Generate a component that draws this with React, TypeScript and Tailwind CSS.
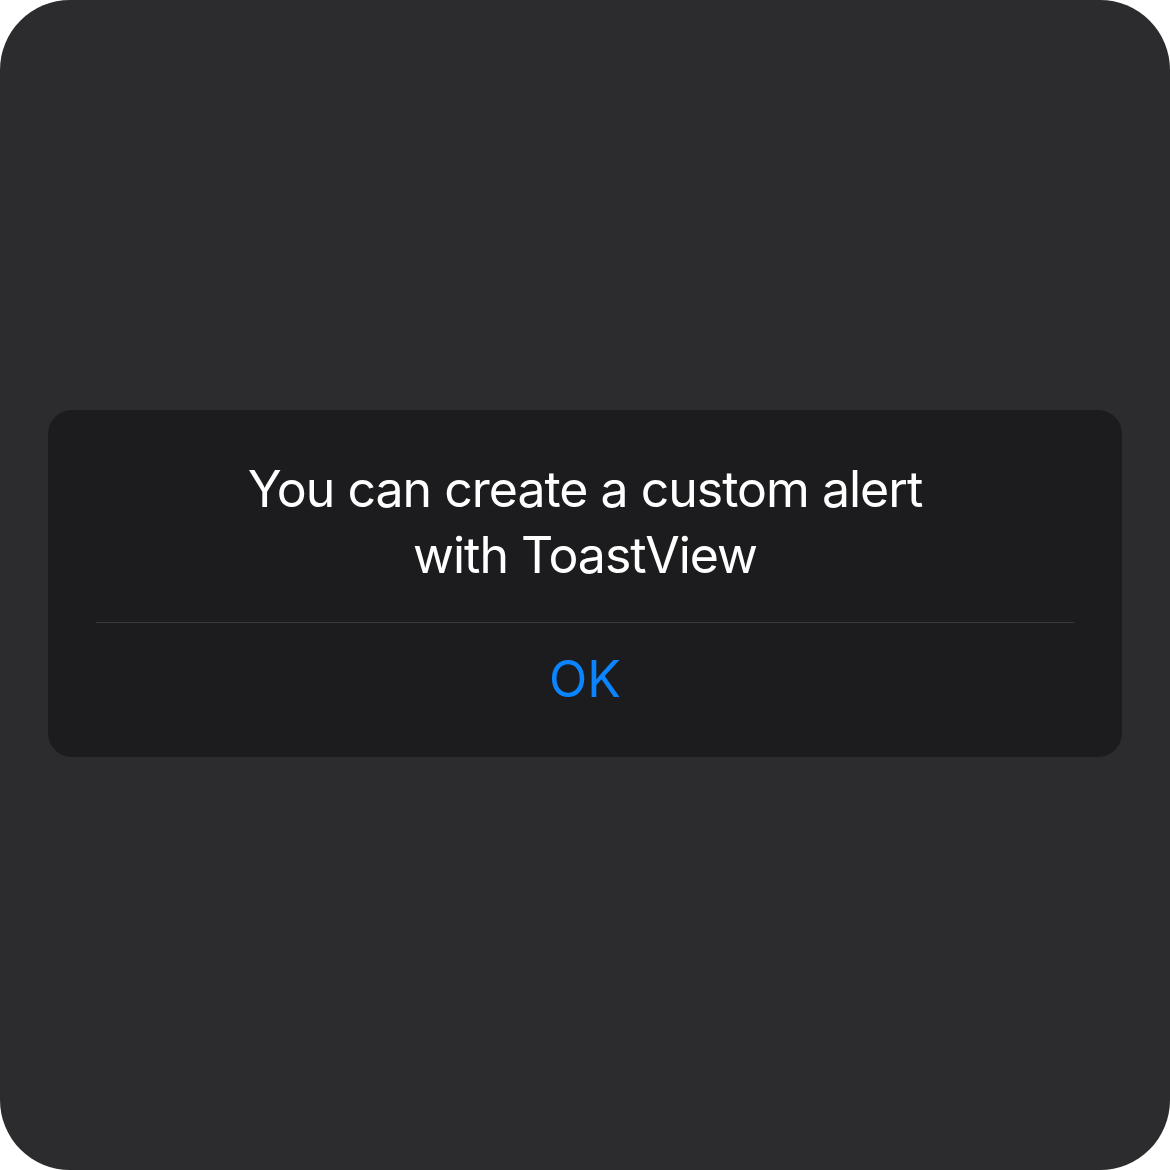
import React from 'react'

export default function App() {
  return (
    <div className="w-[1170px] h-[1170px] bg-white" style={{ fontFamily: 'Inter, "Noto Sans", sans-serif' }}>
      <div className="w-full h-full rounded-[70px] bg-[#2c2c2e] flex flex-col justify-center px-[48px] pb-[4px]">
        <div className="rounded-[24px] bg-[#1c1c1e] h-[347px] flex flex-col">
          <div className="h-[212px] flex items-center justify-center px-12">
            <p className="text-center text-white text-[50px] leading-[66px] tracking-[-1px] pt-[13px]">
              You can create a custom alert
              <br />
              with ToastView
            </p>
          </div>
          <div className="mx-[48px] h-px bg-[#3a3a3c]" />
          <div className="flex-1 flex items-center justify-center pb-[22px]">
            <span className="text-[#0a84ff] text-[50px] leading-none">OK</span>
          </div>
        </div>
      </div>
    </div>
  )
}
